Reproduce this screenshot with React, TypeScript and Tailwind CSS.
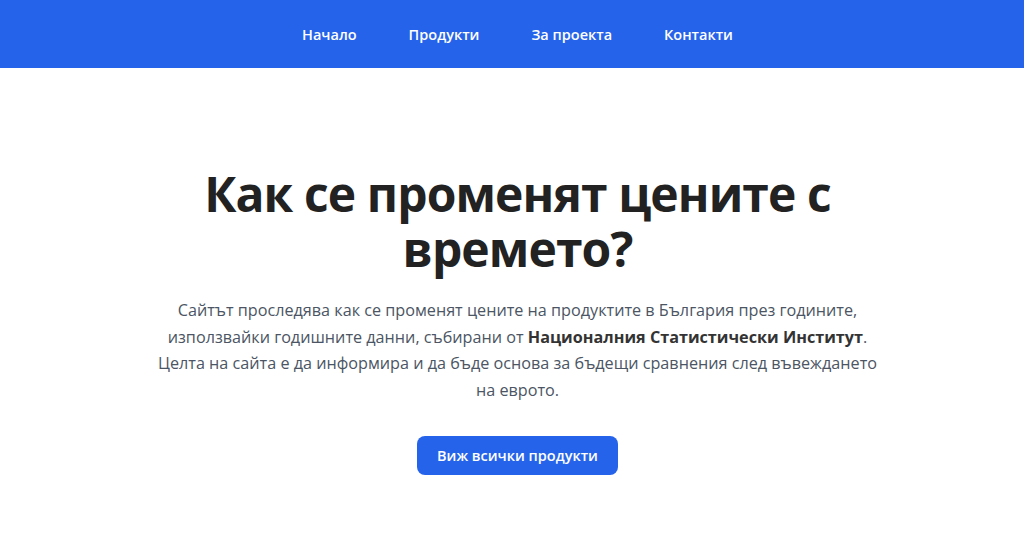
import React from "react";

export default function App() {
  const font = { fontFamily: '"Open Sans", "Noto Sans", sans-serif' };
  return (
    <div className="min-h-[538px] bg-white pl-[11px]" style={font}>
      <nav className="h-[68px] bg-[#2563eb] flex items-center justify-center gap-[52px] text-white font-semibold text-[14.5px] -ml-[11px] pl-[11px] pt-[1px]">
        <a>Начало</a>
        <a>Продукти</a>
        <a>За проекта</a>
        <a>Контакти</a>
      </nav>
      <main className="flex flex-col items-center text-center pt-[98px]">
        <h1 className="text-[48px] leading-[55px] font-bold text-[#222] tracking-[-0.9px] max-w-[680px]">
          Как се променят цените с времето?
        </h1>
        <p className="mt-[21px] text-[16.2px] leading-[26.5px] text-[#4b5563] max-w-[730px]">
          Сайтът проследява как се променят цените на продуктите в България през годините, използвайки годишните данни, събирани от{" "}
          <strong className="font-bold text-[#333]">Националния Статистически Институт</strong>. Целта на сайта е да информира и да бъде основа за бъдещи сравнения след въвеждането на еврото.
        </p>
        <button className="mt-[33px] w-[201px] h-[39px] rounded-lg bg-[#2563eb] text-white font-semibold text-[14.5px]">
          Виж всички продукти
        </button>
      </main>
    </div>
  );
}
